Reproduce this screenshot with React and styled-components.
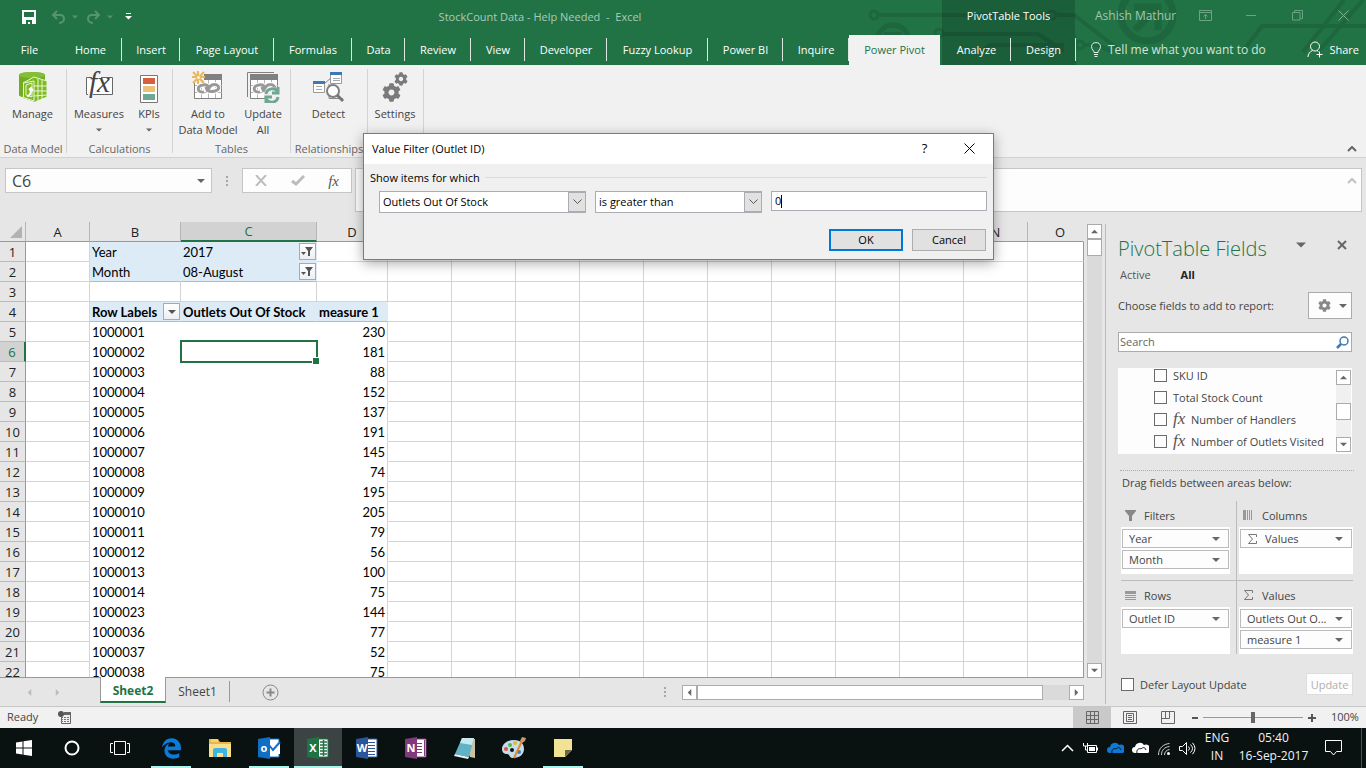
import React, { Fragment } from 'react';
import styled, { createGlobalStyle, css } from 'styled-components';
import { FaCog } from 'react-icons/fa';
import { FaEdgeLegacy } from 'react-icons/fa6';

const GlobalStyle = createGlobalStyle`
  * { box-sizing: border-box; }
  body {
    margin: 0;
    font-family: "Open Sans", "Noto Sans", sans-serif;
    font-size: 11px;
    color: #444;
  }
  button, input, select {
    font: inherit;
    color: inherit;
    margin: 0;
    padding: 0;
  }
  button { background: none; border: 0; }
  svg { display: block; flex: none; }
`;

/* ---------- shared bits ---------- */

const Window = styled.div`
  position: relative;
  display: flex;
  flex-direction: column;
  height: 100vh;
  overflow: hidden;
  background: #e6e6e6;
`;

const Row = styled.div`
  display: flex;
  align-items: center;
`;

const Triangle = ({ size = 7, color = '#666', dir = 'down' }) => {
  const turn = { down: 0, left: 90, up: 180, right: 270 }[dir];
  return (
    <svg width={size} height={size} viewBox="0 0 8 8" aria-hidden="true">
      <path d="M0 2h8L4 6z" fill={color} transform={`rotate(${turn} 4 4)`} />
    </svg>
  );
};

const CheckBox = styled.input.attrs({ type: 'checkbox' })`
  appearance: none;
  flex: none;
  width: 13px;
  height: 13px;
  border: 1px solid #6b6b6b;
  background: #fdfdfd;
`;

/* ---------- title bar and tabs ---------- */

const Header = styled.header`
  position: relative;
  z-index: 0;
  flex: none;
  background: #217346;
  color: #fff;
`;

const Circuit = styled.svg`
  position: absolute;
  top: 0;
  right: 0;
  z-index: -1;
`;

const TitleRow = styled(Row)`
  height: 35px;
`;

const QuickAccess = styled(Row)`
  flex: none;
  width: 138px;
  height: 100%;
  padding: 0 0 2px 22px;
`;

const QuickButton = styled.button`
  display: flex;
  margin-right: ${p => p.$gap || 0}px;
`;

const DocTitle = styled.div`
  flex: 1;
  padding-bottom: 3px;
  text-align: center;
  white-space: pre;
  color: #a9cbb8;
`;

const ContextTitle = styled.div`
  flex: none;
  width: 133px;
  height: 35px;
  line-height: 32px;
  text-align: center;
  background: rgba(10, 30, 20, 0.24);
`;

const UserArea = styled(Row)`
  flex: none;
  width: 291px;
  padding: 0 0 4px 20px;
  color: #a3c5b1;
`;

const UserName = styled.span`
  flex: 1;
  font-size: 12px;
`;

const WindowButton = styled.button`
  display: flex;
  justify-content: center;
  width: 46px;
`;

const TabRow = styled(Row)`
  height: 30px;
  align-items: stretch;
`;

const Tab = styled.button`
  position: relative;
  flex: none;
  width: ${p => p.$w}px;
  height: 30px;
  padding-bottom: 2px;
  white-space: nowrap;
  ${p => p.$context && css`background: rgba(10, 30, 20, 0.24);`}
  ${p => p.$active && css`
    margin-right: 2px;
    background: #f1f1f1;
    color: #217346;
  `}
  ${p => !p.$active && !p.$plain && css`
    &::after {
      content: '';
      position: absolute;
      top: 3px;
      right: 0;
      width: 1px;
      height: 23px;
      background: #dbe9e1;
    }
  `}
`;

const TellMe = styled(Row)`
  flex: 1;
  gap: 6px;
  padding: 0 0 2px 14px;
  font-size: 12px;
  color: #d3e3da;
`;

const Share = styled.button`
  display: flex;
  align-items: center;
  gap: 6px;
  padding: 0 7px 2px 0;
`;

const tabs = [
  { name: 'File', w: 59, plain: true },
  { name: 'Home', w: 63 },
  { name: 'Insert', w: 58 },
  { name: 'Page Layout', w: 94 },
  { name: 'Formulas', w: 78 },
  { name: 'Data', w: 53 },
  { name: 'Review', w: 66 },
  { name: 'View', w: 54 },
  { name: 'Developer', w: 82 },
  { name: 'Fuzzy Lookup', w: 101 },
  { name: 'Power BI', w: 75 },
  { name: 'Inquire', w: 66 },
  { name: 'Power Pivot', w: 91, active: true },
  { name: 'Analyze', w: 69, context: true },
  { name: 'Design', w: 65, context: true }
];

const TopHeader = () => (
  <Header>
    <Circuit width="506" height="65" fill="none" stroke="#1d663e" strokeWidth="4">
      <circle cx="14" cy="15" r="4" strokeWidth="3" />
      <path d="M18 15h170" />
      <circle cx="192" cy="15" r="4" strokeWidth="3" />
      <path d="M196 15h18l48 37" />
      <circle cx="33" cy="41" r="16" strokeWidth="5" />
      <path d="M24 34h16v16M40 34L28 46" />
      <circle cx="79" cy="33" r="4" strokeWidth="3" />
      <path d="M84 34h94l26 17" />
      <path d="M122 51l8-6h74" />
      <circle cx="220" cy="45" r="4" strokeWidth="3" />
      <path d="M224 45h14l14 7" />
      <circle cx="287" cy="15" r="26" strokeWidth="7" />
      <path d="M274 7h24v23M297 8l-22 22" strokeWidth="7" />
      <path d="M383 51l19-25h104" />
      <path d="M443 52L484 0M458 52L503 0" />
    </Circuit>
    <TitleRow>
      <QuickAccess>
        <QuickButton aria-label="Save" $gap={15}>
          <svg width="14" height="14">
            <path d="M0 0h14v14H0zM2 2v5h10V2zM4 10v4h2v-2h2v2h2v-4z" fill="#fff" fillRule="evenodd" />
          </svg>
        </QuickButton>
        <QuickButton aria-label="Undo" $gap={6}>
          <svg width="15" height="14" fill="none" stroke="#55946f" strokeWidth="2">
            <path d="M6 1L2 5l4 4M2 5h7c3 0 4 2 4 4s-2 4-5 4" />
          </svg>
        </QuickButton>
        <QuickButton aria-label="Undo history" $gap={8}><Triangle size={6} color="#55946f" /></QuickButton>
        <QuickButton aria-label="Redo" $gap={6}>
          <svg width="15" height="14" fill="none" stroke="#55946f" strokeWidth="2">
            <path d="M9 1l4 4-4 4M13 5H6C3 5 2 7 2 9s2 4 5 4" />
          </svg>
        </QuickButton>
        <QuickButton aria-label="Redo history" $gap={12}><Triangle size={6} color="#55946f" /></QuickButton>
        <QuickButton aria-label="Customize toolbar">
          <svg width="7" height="7" fill="#fff"><path d="M1 0h5v1H1zM0 3h7L3.500 6.500z" /></svg>
        </QuickButton>
      </QuickAccess>
      <DocTitle>StockCount Data - Help Needed  -  Excel</DocTitle>
      <ContextTitle>PivotTable Tools</ContextTitle>
      <UserArea>
        <UserName>Ashish Mathur</UserName>
        <WindowButton aria-label="Ribbon options">
          <svg width="13" height="11" fill="none" stroke="#6ba384">
            <path d="M.5.5h12v10H.5zM.5 2.500h12M6.500 9V4.500M4.500 6.500l2-2 2 2" />
          </svg>
        </WindowButton>
        <WindowButton aria-label="Minimize">
          <svg width="10" height="11" stroke="#6ba384"><path d="M0 5.500h10" /></svg>
        </WindowButton>
        <WindowButton aria-label="Restore">
          <svg width="11" height="11" fill="none" stroke="#6ba384">
            <path d="M.5 2.500h7.500v7.500H.5zM2.500 2.500v-2h8v8h-2" />
          </svg>
        </WindowButton>
        <WindowButton aria-label="Close window">
          <svg width="11" height="11" stroke="#7fb095"><path d="M.5.5l10 10M10.500.5l-10 10" /></svg>
        </WindowButton>
      </UserArea>
    </TitleRow>
    <TabRow as="nav">
      {tabs.map(t => (
        <Tab key={t.name} $w={t.w} $plain={t.plain} $active={t.active} $context={t.context}>
          {t.name}
        </Tab>
      ))}
      <TellMe>
        <svg width="12" height="15" fill="none" stroke="#e6f0ea">
          <path d="M4 10.500c0-2-2.500-3-2.500-6A4.300 4.300 0 0 1 6 .7a4.300 4.300 0 0 1 4.500 3.800c0 3-2.500 4-2.500 6zM4 12.500h4M4.500 14.500h3" />
        </svg>
        Tell me what you want to do
      </TellMe>
      <Share>
        <svg width="16" height="17" fill="none" stroke="#fff">
          <circle cx="8" cy="5.500" r="4.500" />
          <path d="M1 16c0-3 2-5.500 4.500-6.500M10 9.500l1.500 1M9.500 13.500h6M12.500 10.500v6" />
        </svg>
        Share
      </Share>
    </TabRow>
  </Header>
);

/* ---------- ribbon ---------- */

const Ribbon = styled.section`
  display: flex;
  flex: none;
  height: 93px;
  background: #f1f1f1;
  border-bottom: 1px solid #d2d2d2;
`;

const Group = styled.div`
  position: relative;
  display: flex;
  flex-direction: column;
  flex: none;
  width: ${p => p.$w}px;
  padding-top: 6px;
  &::after {
    content: '';
    position: absolute;
    top: 4px;
    right: 0;
    width: 1px;
    height: 84px;
    background: #d4d4d4;
  }
`;

const GroupItems = styled.div`
  display: flex;
  flex: 1;
  justify-content: center;
  padding-right: 2px;
`;

const GroupName = styled.div`
  height: 16px;
  padding-right: 1px;
  line-height: 16px;
  text-align: center;
  white-space: nowrap;
  color: #666;
`;

const BigButton = styled.button`
  display: flex;
  flex-direction: column;
  align-items: center;
  width: ${p => p.$w}px;
  line-height: 16px;
  white-space: nowrap;
`;

const ButtonIcon = styled.span`
  margin-bottom: 3px;
`;

const MenuArrow = styled.span`
  display: flex;
  align-items: center;
  height: 16px;
`;

const CollapseButton = styled.button`
  display: flex;
  align-self: flex-end;
  margin: 0 9px 5px auto;
`;

const Chevron = ({ color }) => (
  <svg width="10" height="6" fill="none" stroke={color} strokeWidth="2"><path d="M1 5l4-4 4 4" /></svg>
);

const FxGlyph = styled.span`
  width: ${p => p.$w || 14}px;
  font: italic ${p => p.$size}px "Liberation Serif", serif;
  line-height: 16px;
  color: #555;
`;

const ManageIcon = () => (
  <svg width="32" height="32">
    <path d="M2 4c0-4 26-4 26 0v20c0 4-26 4-26 0z" fill="#70ad23" />
    <path d="M2 4c0-4 26-4 26 0s-26 4-26 0z" fill="#84c035" />
    <path d="M6 12l11-6 13 4v16l-12 5-12-4z" fill="#7fba22" />
    <path d="M6 12l11-6 13 4M6.500 12v14.500l10.500 3.500V10zM9 14l6-2v14l-6-2zM17 15h13M17 20h13M17 25l13-1M21 8v22M25 9v19M30 10v16l-12 5" fill="none" stroke="#eaf6d8" />
    <path d="M10 25c3 0 4-2 4-7M12 19l2-2 2 3" fill="none" stroke="#fff" strokeWidth="2" />
  </svg>
);

const MeasuresIcon = () => (
  <svg width="32" height="32">
    <path d="M3.500 6.500h26v17h-26z" fill="#fff" stroke="#666" />
    <path d="M9 4h9v4H9zM5 21h5v4H5z" fill="#f4f4f4" />
    <text x="6" y="21" fontFamily="Liberation Serif" fontStyle="italic" fontSize="29" fill="#444">fx</text>
  </svg>
);

const KpiIcon = () => (
  <svg width="32" height="32">
    <path d="M7.500 4.500h17v27h-17z" fill="#fff" stroke="#777" />
    <path d="M10 7h12v6H10z" fill="#d65f3f" />
    <path d="M10 15h12v6H10z" fill="#ecc077" />
    <path d="M10 23h12v6H10z" fill="#6fa794" />
  </svg>
);

const TableBase = () => (
  <Fragment>
    <path d="M2.500 3.500h27v24h-27z" fill="#fff" stroke="#808080" />
    <path d="M2 3h28v6H2z" fill="#808080" />
    <path d="M3 14.500h27M3 21.500h27M9.500 9v18M16.500 9v18M23.500 9v18" stroke="#b5b5b5" fill="none" />
    <path d="M12 21c-7 1-8-6-1-7 4-1 6 2 6 3M14 16c1 5 5 5 9 4 7-2 3-8-3-6-3 1-2 4-6 6" stroke="#fff" strokeWidth="5" fill="none" />
    <path d="M12 21c-7 1-8-6-1-7 4-1 6 2 6 3M14 16c1 5 5 5 9 4 7-2 3-8-3-6-3 1-2 4-6 6" stroke="#999" strokeWidth="3" fill="none" />
  </Fragment>
);

const AddIcon = () => (
  <svg width="32" height="32">
    <TableBase />
    <path d="M0 0h12v12H0z" fill="#f1f1f1" />
    <path d="M6 0v13M0 6h13M1 1l11 11M12 1L1 12" stroke="#e9b65c" strokeWidth="2" />
    <circle cx="6.500" cy="6.500" r="2" fill="#fff4d8" stroke="#e9b65c" />
  </svg>
);

const UpdateIcon = () => (
  <svg width="34" height="32">
    <path d="M1.500 26V1.500H28" fill="none" stroke="#808080" />
    <g transform="translate(2)"><TableBase /></g>
    <circle cx="26" cy="24" r="8" fill="#f1f1f1" />
    <path d="M20 23c1-6 9-7 12-2M32 16v6h-6M32 26c-1 6-9 7-12 2M20 32v-6h6" fill="none" stroke="#6fa794" strokeWidth="3" />
  </svg>
);

const DetectIcon = () => (
  <svg width="32" height="32">
    <path d="M12 12l6-5M16 13v14.500h14" fill="none" stroke="#888" />
    <path d="M17.500 1.500h11v11h-11zM.5 10.500h11v11H.5z" fill="#fff" stroke="#999" />
    <path d="M17 1h12v3H17zM0 10h12v3H0z" fill="#3c78b4" />
    <path d="M20 7.500h7M20 9.500h7M3 15.500h6M3 18.500h6" stroke="#aaa" />
    <circle cx="20" cy="20" r="6" fill="#fff" stroke="#808080" strokeWidth="2" />
    <path d="M24 24l6 6" stroke="#777" strokeWidth="3" />
  </svg>
);

const SettingsIcon = () => (
  <svg width="32" height="32">
    <FaCog x="3" y="12" size={19} color="#7a7a7a" />
    <FaCog x="15" y="1" size={14} color="#7a7a7a" />
  </svg>
);

const groups = [
  { name: 'Data Model', w: 67, items: [{ icon: ManageIcon, lines: ['Manage'], w: 60 }] },
  {
    name: 'Calculations',
    w: 106,
    items: [
      { icon: MeasuresIcon, lines: ['Measures'], w: 60, menu: true },
      { icon: KpiIcon, lines: ['KPIs'], w: 40, menu: true }
    ]
  },
  {
    name: 'Tables',
    w: 118,
    items: [
      { icon: AddIcon, lines: ['Add to', 'Data Model'], w: 64 },
      { icon: UpdateIcon, lines: ['Update', 'All'], w: 46 }
    ]
  },
  { name: 'Relationships', w: 77, items: [{ icon: DetectIcon, lines: ['Detect'], w: 60 }] },
  { name: '', w: 56, items: [{ icon: SettingsIcon, lines: ['Settings'], w: 54 }] }
];

const RibbonBar = () => (
  <Ribbon>
    {groups.map(g => (
      <Group key={g.w} $w={g.w}>
        <GroupItems>
          {g.items.map(({ icon: Icon, lines, w, menu }) => (
            <BigButton key={lines[0]} $w={w}>
              <ButtonIcon><Icon /></ButtonIcon>
              {lines.map(l => <span key={l}>{l}</span>)}
              {menu && <MenuArrow><Triangle size={6} /></MenuArrow>}
            </BigButton>
          ))}
        </GroupItems>
        <GroupName>{g.name}</GroupName>
      </Group>
    ))}
    <CollapseButton aria-label="Collapse the ribbon"><Chevron color="#666" /></CollapseButton>
  </Ribbon>
);

/* ---------- formula bar ---------- */

const FormulaRow = styled.div`
  display: flex;
  flex: none;
  align-items: flex-start;
  height: 64px;
  padding: 10px 4px 0 5px;
`;

const NameBox = styled(Row)`
  flex: none;
  width: 207px;
  height: 25px;
  padding: 0 6px;
  border: 1px solid #c6c6c6;
  background: #fdfdfd;
`;

const NameInput = styled.input`
  flex: 1;
  min-width: 0;
  height: 22px;
  border: 0;
  background: none;
  font-size: 16px;
`;

const Dots = styled(Row)`
  justify-content: center;
  width: ${p => p.$w}px;
  height: 25px;
`;

const FormulaButtons = styled(Row)`
  flex: none;
  justify-content: space-between;
  width: 110px;
  height: 25px;
  padding: 0 12px;
  margin-right: 3px;
  border: 1px solid #c6c6c6;
  background: #fdfdfd;
`;

const FormulaField = styled.div`
  display: flex;
  flex: 1;
  height: 44px;
  border: 1px solid #c6c6c6;
  background: #fdfdfd;
`;

const FormulaInput = styled.input`
  flex: 1;
  border: 0;
  background: none;
`;

const ExpandButton = styled.button`
  display: flex;
  align-self: flex-start;
  margin: 9px 4px 0;
`;

const DotColumn = () => (
  <svg width="2" height="10" fill="#a6a6a6"><path d="M0 0h2v2H0zM0 4h2v2H0zM0 8h2v2H0z" /></svg>
);

const FormulaBar = () => (
  <FormulaRow>
    <NameBox>
      <NameInput aria-label="Name box" defaultValue="C6" />
      <Triangle size={8} />
    </NameBox>
    <Dots $w={30}><DotColumn /></Dots>
    <FormulaButtons>
      <button aria-label="Cancel entry">
        <svg width="12" height="11" stroke="#bdbdbd" strokeWidth="2"><path d="M1 0l10 11M11 0L1 11" /></svg>
      </button>
      <button aria-label="Enter">
        <svg width="14" height="11" fill="none" stroke="#bdbdbd" strokeWidth="3"><path d="M1 6l4 3 8-8" /></svg>
      </button>
      <button aria-label="Insert function"><FxGlyph as="b" $size={15}>fx</FxGlyph></button>
    </FormulaButtons>
    <FormulaField>
      <FormulaInput aria-label="Formula" />
      <ExpandButton aria-label="Expand formula bar"><Chevron color="#c0c0c0" /></ExpandButton>
    </FormulaField>
  </FormulaRow>
);

/* ---------- sheet ---------- */

const Workspace = styled.div`
  display: flex;
  flex: 1;
  min-height: 0;
`;

const SheetSide = styled.main`
  display: flex;
  flex: 1;
  flex-direction: column;
  min-width: 0;
`;

const SheetArea = styled.div`
  display: flex;
  flex: 1;
  min-height: 0;
`;

const SheetScroll = styled.div`
  flex: 1;
  min-width: 0;
  overflow: hidden;
  border-bottom: 1px solid #999;
`;

const Sheet = styled.table`
  width: 100%;
  table-layout: fixed;
  border-spacing: 0;
  background: #fff;
  font: 13px Lato, "Open Sans", sans-serif;
  color: #000;
`;

const Col = styled.col`
  width: ${p => (p.$w ? `${p.$w}px` : 'auto')};
`;

const headCell = css`
  height: 20px;
  padding: 0;
  font: 13px/18px "Open Sans", sans-serif;
  text-align: center;
  background: ${p => (p.$on ? '#d2d2d2' : '#e6e6e6')};
  color: ${p => (p.$on ? '#217346' : '#222')};
`;

const ColHead = styled.th`
  ${headCell}
  border-right: 1px solid #b5b5b5;
  border-bottom: ${p => (p.$on ? '2px solid #217346' : '1px solid #999')};
  &:last-child {
    padding-left: 9px;
    border-right-color: #e6e6e6;
  }
`;

const RowHead = styled.th`
  ${headCell}
  border-bottom: 1px solid #bbb;
  border-right: ${p => (p.$on ? '2px solid #217346' : '1px solid #999')};
`;

const Corner = styled.td`
  padding: 3px 3px 2px 10px;
  background: #e6e6e6;
  border-right: 1px solid #b5b5b5;
  border-bottom: 1px solid #999;
`;

const Cell = styled.td`
  position: relative;
  height: 20px;
  padding: 2px 2px 0;
  line-height: 17px;
  white-space: nowrap;
  text-align: ${p => (p.$right ? 'right' : 'left')};
  font-weight: ${p => (p.$bold ? 700 : 400)};
  border-right: 1px solid ${p => (p.$noRight ? 'transparent' : '#d4d4d4')};
  border-bottom: 1px solid ${p => (p.$noBottom ? 'transparent' : '#d4d4d4')};
  ${p => p.$blue && css`
    background: #ddebf7;
    border-color: #ddebf7;
  `}
  ${p => p.$underline && css`border-bottom-color: #9bc2e6;`}
  &:last-child { border-right-color: #999; }
`;

// frame and fill handle of the selected cell
const Selection = styled.div`
  position: absolute;
  inset: -2px -2px -2px -1px;
  z-index: 1;
  border: 2px solid #217346;
  &::after {
    content: '';
    position: absolute;
    right: -3px;
    bottom: -3px;
    width: 6px;
    height: 6px;
    border: solid #fff;
    border-width: 1px 0 0 1px;
    background: #217346;
  }
`;

const CellInner = styled.div`
  display: flex;
  justify-content: space-between;
  height: 17px;
  margin-right: -2px;
`;

const FilterButton = styled.button`
  display: flex;
  align-items: center;
  justify-content: center;
  width: 17px;
  height: 17px;
  margin-top: -1px;
  border: 1px solid #a3abb5;
  background: linear-gradient(#fff, #eceff3);
`;

const FunnelSmall = () => (
  <svg width="13" height="11">
    <path d="M4 1h8L9 5v5H7V5z" fill="#555" />
    <path d="M0 6h5L2.500 9z" fill="#555" />
  </svg>
);

const letters = 'ABCDEFGHIJKLMNO'.split('');
const colWidths = [64, 91, 136, 71, 64, 64, 64, 64, 64, 64, 64, 64, 64, 64, 0];

const records = [
  ['1000001', 230], ['1000002', 181], ['1000003', 88], ['1000004', 152],
  ['1000005', 137], ['1000006', 191], ['1000007', 145], ['1000008', 74],
  ['1000009', 195], ['1000010', 205], ['1000011', 79], ['1000012', 56],
  ['1000013', 100], ['1000014', 75], ['1000023', 144], ['1000036', 77],
  ['1000037', 52], ['1000038', 75]
];

const Blanks = ({ from, to = 15 }) =>
  letters.slice(from, to).map(l => <Cell key={l} />);

const PivotSheet = () => (
  <Sheet>
    <colgroup>
      <Col $w={26} />
      {colWidths.map((w, i) => <Col key={letters[i]} $w={w} />)}
    </colgroup>
    <thead>
      <tr>
        <Corner>
          <svg width="12" height="12"><path d="M12 0v12H0z" fill="#b2b2b2" /></svg>
        </Corner>
        {letters.map(l => <ColHead key={l} scope="col" $on={l === 'C'}>{l}</ColHead>)}
      </tr>
    </thead>
    <tbody>
      {[['Year', '2017'], ['Month', '08-August']].map(([label, value], i) => (
        <tr key={label}>
          <RowHead scope="row">{i + 1}</RowHead>
          <Cell />
          <Cell $blue $underline={i === 1}>{label}</Cell>
          <Cell $blue $underline={i === 1}>
            <CellInner>
              {value}
              <FilterButton aria-label={`Filter ${label}`}><FunnelSmall /></FilterButton>
            </CellInner>
          </Cell>
          <Blanks from={3} />
        </tr>
      ))}
      <tr>
        <RowHead scope="row">3</RowHead>
        <Blanks from={0} />
      </tr>
      <tr>
        <RowHead scope="row">4</RowHead>
        <Cell />
        <Cell $blue $underline $bold>
          <CellInner>
            Row Labels
            <FilterButton aria-label="Filter row labels"><Triangle size={8} color="#555" /></FilterButton>
          </CellInner>
        </Cell>
        <Cell $blue $underline $bold>Outlets Out Of Stock</Cell>
        <Cell $blue $underline $bold>measure 1</Cell>
        <Blanks from={4} />
      </tr>
      {records.map(([id, measure], i) => (
        <tr key={id}>
          <RowHead scope="row" $on={i === 1}>{i + 5}</RowHead>
          <Cell />
          <Cell $noRight $noBottom>{id}</Cell>
          <Cell $noRight $noBottom>{i === 1 && <Selection />}</Cell>
          <Cell $right $noBottom>{measure}</Cell>
          <Blanks from={4} />
        </tr>
      ))}
    </tbody>
  </Sheet>
);

/* ---------- scroll bars ---------- */

const VScroll = styled.div`
  display: flex;
  flex: none;
  flex-direction: column;
  width: 15px;
  margin: ${p => p.$margin};
  background: ${p => p.$track || '#dadada'};
`;

const HScroll = styled.div`
  display: flex;
  flex: none;
  width: 38%;
  height: 15px;
  margin-left: 16px;
  background: #dadada;
`;

const ScrollButton = styled.button`
  display: flex;
  flex: none;
  align-items: center;
  justify-content: center;
  width: 15px;
  height: 15px;
  border: 1px solid #ababab;
  background: #fff;
`;

const Thumb = styled.div`
  flex: none;
  width: ${p => p.$w || '15px'};
  height: ${p => p.$h || '15px'};
  border: 1px solid #ababab;
  background: #fff;
`;

const Spacer = styled.div`
  flex: ${p => p.$grow || 1};
`;

/* ---------- sheet tabs ---------- */

const SheetTabs = styled(Row)`
  flex: none;
  height: 28px;
  padding: 0 21px 0 26px;
`;

const NavButton = styled.button`
  display: flex;
  margin-right: 21px;
`;

const SheetTab = styled.button`
  position: relative;
  align-self: flex-start;
  width: 64px;
  height: 21px;
  margin-top: 3px;
  font-size: 12px;
  border-right: 1px solid #999;
  ${p => p.$active && css`
    width: 66px;
    height: 26px;
    margin: -1px 0 0 18px;
    padding-top: 3px;
    border: solid #999;
    border-width: 0 1px;
    border-bottom: 2px solid #217346;
    background: #fff;
    color: #217346;
    font-weight: 700;
  `}
`;

const AddSheet = styled.button`
  display: flex;
  margin-left: 32px;
`;

/* ---------- fields panel ---------- */

const Panel = styled.aside`
  display: flex;
  flex: none;
  flex-direction: column;
  width: 261px;
  margin: 2px 0;
  padding: 10px 14px 0 12px;
  border-left: 1px solid #bbb;
`;

const PanelHead = styled(Row)`
  height: 28px;
`;

const PanelTitle = styled.h2`
  flex: 1;
  margin: 0;
  font-size: 20px;
  font-weight: 300;
  white-space: nowrap;
  color: #217346;
`;

const PanelIcon = styled.button`
  display: flex;
  margin: 0 5px 6px 26px;
`;

const PanelTabs = styled(Row)`
  height: 20px;
  margin-top: 2px;
`;

const PanelTab = styled.button`
  margin-left: 2px;
  margin-right: 28px;
  font-weight: ${p => (p.$active ? 700 : 400)};
  color: ${p => (p.$active ? '#222' : '#555')};
`;

const ChooseRow = styled(Row)`
  justify-content: space-between;
  height: 27px;
  margin-top: 8px;
`;

const ToolsButton = styled.button`
  display: flex;
  align-items: center;
  justify-content: space-between;
  width: 44px;
  height: 27px;
  padding: 0 4px 0 9px;
  border: 1px solid #ababab;
  background: #fdfdfd;
`;

const SearchBox = styled(Row)`
  height: 20px;
  margin-top: 13px;
  padding: 0 2px 0 1px;
  border: 1px solid #ababab;
  background: #fff;
`;

const SearchInput = styled.input`
  flex: 1;
  min-width: 0;
  padding-bottom: 2px;
  border: 0;
  background: none;
  &::placeholder { color: #666; opacity: 1; }
`;

const FieldBox = styled.div`
  display: flex;
  height: 86px;
  margin-top: 16px;
  background: #fdfdfd;
`;

const FieldList = styled.ul`
  flex: 1;
  min-width: 0;
  margin: 0;
  padding: 0 0 0 36px;
  overflow: hidden;
  list-style: none;
`;

const Field = styled.label`
  display: flex;
  align-items: center;
  gap: 6px;
  height: ${p => (p.$first ? 18 : 22)}px;
  white-space: nowrap;
  ${p => p.$first && css`padding-bottom: 3px;`}
`;

const DragHint = styled.p`
  height: 21px;
  margin: 16px -2px 0 2px;
  padding: 3px 0 0 2px;
  line-height: 17px;
  border-top: 1px dotted #aaa;
`;

const Areas = styled.div`
  display: grid;
  grid-template-columns: 1fr 1fr;
  margin: 10px -1px 0 3px;
`;

const Area = styled.section`
  min-width: 0;
  padding: 0 ${p => (p.$left ? '6px' : '0')} ${p => (p.$top ? '6px' : '0')} ${p => (p.$left ? '0' : '2px')};
  border-right: ${p => (p.$left ? '1px solid #bbb' : '0')};
  border-bottom: ${p => (p.$top ? '1px solid #bbb' : '0')};
`;

const AreaHead = styled.h3`
  display: flex;
  align-items: center;
  gap: 8px;
  height: 26px;
  margin: 0;
  padding: 2px 0 0 4px;
  font-size: 11px;
  font-weight: 400;
`;

const AreaBox = styled.div`
  height: 47px;
  padding: 2px 1px;
  background: #fff;
`;

const Chip = styled.button`
  display: flex;
  align-items: center;
  gap: 7px;
  width: 100%;
  height: 19px;
  margin-bottom: 2px;
  padding: 0 8px 0 6px;
  border: 1px solid #bbb;
  background: #fdfdfd;
  text-align: left;
`;

const ChipText = styled.span`
  flex: 1;
  overflow: hidden;
  white-space: nowrap;
`;

const Sigma = () => (
  <svg width="11" height="10" fill="none" stroke="#777"><path d="M9.500 3v-2.500h-8l4 4.500-4 4.500h8V7" /></svg>
);

const areaIcons = {
  Filters: <svg width="11" height="11"><path d="M0 0h11v1L7 6v5H4V6L0 1z" fill="#888" /></svg>,
  Columns: <svg width="11" height="10" fill="#999"><path d="M0 0h3v10H0zM4 0h1v10H4zM6 0h1v10H6zM8 0h1v10H8z" /></svg>,
  Rows: <svg width="11" height="9" fill="#999"><path d="M0 0h11v3H0zM0 4h11v1H0zM0 6h11v1H0zM0 8h11v1H0z" /></svg>,
  Values: <Sigma />
};

const areas = [
  { name: 'Filters', left: true, top: true, items: ['Year', 'Month'] },
  { name: 'Columns', top: true, items: ['Values'], sigma: true },
  { name: 'Rows', left: true, items: ['Outlet ID'] },
  { name: 'Values', items: ['Outlets Out O...', 'measure 1'] }
];

const fields = [
  { name: 'SKU ID' },
  { name: 'Total Stock Count' },
  { name: 'Number of Handlers', fx: true },
  { name: 'Number of Outlets Visited', fx: true }
];

const PanelFoot = styled(Row)`
  justify-content: space-between;
  height: 22px;
  margin: 19px -1px 0 3px;
`;

const Defer = styled.label`
  display: flex;
  align-items: center;
  gap: 6px;
`;

const UpdateButton = styled.button`
  width: 47px;
  height: 22px;
  border: 1px solid #ddd;
  background: #fdfdfd;
  color: #b0b0b0;
`;

const FieldsPanel = () => (
  <Panel>
    <PanelHead>
      <PanelTitle>PivotTable Fields</PanelTitle>
      <PanelIcon aria-label="Pane options"><Triangle size={10} /></PanelIcon>
      <PanelIcon aria-label="Close pane">
        <svg width="10" height="10" stroke="#666" strokeWidth="2"><path d="M1 1l8 8M9 1L1 9" /></svg>
      </PanelIcon>
    </PanelHead>
    <PanelTabs>
      <PanelTab>Active</PanelTab>
      <PanelTab $active>All</PanelTab>
    </PanelTabs>
    <ChooseRow>
      Choose fields to add to report:
      <ToolsButton aria-label="Tools">
        <FaCog size={13} color="#888" />
        <Triangle size={8} />
      </ToolsButton>
    </ChooseRow>
    <SearchBox>
      <SearchInput aria-label="Search fields" placeholder="Search" />
      <svg width="13" height="13" fill="none" stroke="#3c78b4">
        <circle cx="8" cy="5" r="4" strokeWidth="1.500" />
        <path d="M5 8l-4 4" strokeWidth="2.500" />
      </svg>
    </SearchBox>
    <FieldBox>
      <FieldList>
        {fields.map((f, i) => (
          <li key={f.name}>
            <Field $first={i === 0}>
              <CheckBox />
              {f.fx && <FxGlyph $size={17} $w={12}>fx</FxGlyph>}
              {f.name}
            </Field>
          </li>
        ))}
      </FieldList>
      <VScroll $margin="2px 1px 2px 0" $track="#f0f0f0">
        <ScrollButton aria-label="Fields up"><Triangle dir="up" /></ScrollButton>
        <Spacer $grow={18} />
        <Thumb $h="17px" />
        <Spacer $grow={17} />
        <ScrollButton aria-label="Fields down"><Triangle /></ScrollButton>
      </VScroll>
    </FieldBox>
    <DragHint>Drag fields between areas below:</DragHint>
    <Areas>
      {areas.map(a => (
        <Area key={a.items[0]} $left={a.left} $top={a.top}>
          <AreaHead>{areaIcons[a.name]}{a.name}</AreaHead>
          <AreaBox>
            {a.items.map(item => (
              <Chip key={item}>
                {a.sigma && <Sigma />}
                <ChipText>{item}</ChipText>
                <Triangle size={8} />
              </Chip>
            ))}
          </AreaBox>
        </Area>
      ))}
    </Areas>
    <PanelFoot>
      <Defer><CheckBox />Defer Layout Update</Defer>
      <UpdateButton disabled>Update</UpdateButton>
    </PanelFoot>
  </Panel>
);

/* ---------- status bar ---------- */

const StatusBar = styled(Row)`
  flex: none;
  height: 22px;
  padding-left: 7px;
  border-top: 1px solid #c6c6c6;
  background: #f1f1f1;
`;

const StatusText = styled.span`
  padding-bottom: 2px;
`;

const ViewButton = styled.button`
  display: flex;
  align-items: center;
  justify-content: center;
  width: 38px;
  height: 21px;
  background: ${p => (p.$on ? '#c9c9c9' : 'none')};
`;

const ZoomSlider = styled.input.attrs({ type: 'range' })`
  appearance: none;
  width: 100px;
  height: 13px;
  margin: 0 5px;
  background: linear-gradient(#999, #999) center / 100% 1px no-repeat;
  &::-webkit-slider-thumb {
    appearance: none;
    width: 4px;
    height: 11px;
    background: #666;
  }
`;

const Percent = styled(StatusText)`
  width: 27px;
  margin: 0 8px 0 15px;
  white-space: nowrap;
`;

const RecordIcon = styled.button`
  display: flex;
  margin-left: 20px;
`;

const Status = () => (
  <StatusBar>
    <StatusText>Ready</StatusText>
    <RecordIcon aria-label="Record macro">
      <svg width="13" height="13">
        <path d="M3.500 2.500h9v10h-9zM5 2.500h8" fill="none" stroke="#666" />
        <path d="M6 1h7v3H6z" fill="#666" />
        <path d="M3 6.500h9M3 8.500h9M3 10.500h9" stroke="#777" strokeDasharray="2 1" />
        <circle cx="3" cy="3" r="3" fill="#555" />
      </svg>
    </RecordIcon>
    <Spacer />
    <ViewButton $on aria-label="Normal">
      <svg width="13" height="13" fill="none" stroke="#666"><path d="M.5.5h12v12H.5zM.5 4.500h12M.5 8.500h12M4.500.5v12M8.500.5v12" /></svg>
    </ViewButton>
    <ViewButton aria-label="Page layout">
      <svg width="14" height="13" fill="none" stroke="#666"><path d="M.5.5h13v12H.5zM3.500 2.500h7v8h-7zM5 4.500h4M5 6.500h4M5 8.500h4" /></svg>
    </ViewButton>
    <ViewButton aria-label="Page break preview">
      <svg width="14" height="13" fill="none" stroke="#666"><path d="M.5.5h13v12H.5zM4.500.5v7M8.500.5v7M.5 7.500h8" /></svg>
    </ViewButton>
    <Row>
      <button aria-label="Zoom out">
        <svg width="11" height="8"><path d="M5 3h6v2H5z" fill="#555" /></svg>
      </button>
      <ZoomSlider aria-label="Zoom" defaultValue="50" />
      <button aria-label="Zoom in">
        <svg width="8" height="8"><path d="M3 0h2v3h3v2H5v3H3V5H0V3h3z" fill="#555" /></svg>
      </button>
    </Row>
    <Percent>100%</Percent>
  </StatusBar>
);

/* ---------- taskbar ---------- */

const Taskbar = styled.footer`
  display: flex;
  flex: none;
  height: 40px;
  background: #0a1211;
  color: #f2f2f2;
`;

const TaskButton = styled.button`
  display: flex;
  flex: none;
  align-items: center;
  justify-content: center;
  width: 48px;
  height: 40px;
  margin-right: ${p => (p.$app ? 1 : 0)}px;
  background: ${p => (p.$on ? '#3b4443' : 'none')};
  ${p => p.$line && css`
    box-shadow: inset 0 -2px #a8f5ee;
  `}
  ${p => p.$line && !p.$on && css`
    width: 40px;
    margin: 0 5px 0 4px;
  `}
`;

const AppButtons = styled.div`
  display: flex;
  flex: 1;
  margin-left: 3px;
`;

const TrayIcons = styled(Row)`
  flex: none;
  gap: 8px;
  button { display: flex; }
`;

const TrayText = styled.div`
  flex: none;
  width: ${p => p.$w}px;
  padding-top: 1px;
  font-size: 12px;
  line-height: 18px;
  text-align: center;
  white-space: nowrap;
`;

const ShowDesktop = styled.button`
  width: 5px;
  margin-left: 4px;
  border-left: 1px solid #4a5251;
`;

const OfficeIcon = ({ letter, color, kind }) => (
  <svg width="24" height="24">
    <path d="M12 3h10v18H12z" fill="#fff" stroke={color} />
    {kind === 'grid' && <path d="M14 6h7M14 9h7M14 12h7M14 15h7M14 18h7M17.500 4v16" stroke={color} strokeWidth="1.500" />}
    {kind === 'text' && <path d="M13 6.500h7M13 9.500h7M13 12.500h7M13 15.500h7M13 18.500h7" stroke={color} />}
    {kind === 'book' && <path d="M13 7.500h5M13 10.500h5M13 13.500h5M13 16.500h5M20.500 4v16" stroke={color} />}
    {kind === 'mail' && <path d="M12 6h11v12H12z" fill="#fff" />}
    {kind === 'mail' && <path d="M12 9l4 5 7-8" fill="none" stroke={color} strokeWidth="2" />}
    <path d="M1 3l12-2v22L1 21z" fill={color} />
    <text x="7" y="16" textAnchor="middle" fontFamily="Open Sans" fontWeight="700" fontSize="11" fill="#fff">{letter}</text>
  </svg>
);

const FolderIcon = () => (
  <svg width="22" height="20">
    <path d="M0 1h9l2 3h11v15H0z" fill="#e8b64c" />
    <path d="M0 6h22v13H0z" fill="#fbe08c" />
    <path d="M2 1h7v3H2z" fill="#f7d264" />
    <path d="M4 19v-7q0-2 2-2h10q2 0 2 2v7h-4v-4H8v4z" fill="#3fb4e0" />
  </svg>
);

const NotepadIcon = () => (
  <svg width="24" height="24">
    <path d="M9 2l13 1v19l-5-1z" fill="#c9c2a0" />
    <path d="M9 2h12l-5 19-14-3z" fill="#5fb3c4" />
    <path d="M9 2h12l-2 7L7 7z" fill="#c7e8ee" />
    <path d="M2 18l14 3-1 2-14-3z" fill="#e2f2f4" />
  </svg>
);

const PaintIcon = () => (
  <svg width="26" height="26">
    <path d="M13 5c7 0 10 4 10 9s-4 9-11 9c-4 0-3-4-6-4S1 17 1 14c0-5 5-9 12-9z" fill="#c4ddea" />
    <circle cx="11" cy="15" r="2" fill="#0a1211" />
    <circle cx="5" cy="14" r="2" fill="#e2503f" />
    <circle cx="9" cy="10" r="2" fill="#56b947" />
    <circle cx="14" cy="8" r="2" fill="#f0b429" />
    <circle cx="18" cy="17" r="2" fill="#3b7fd0" />
    <path d="M13 23l8-17" stroke="#e08a2c" strokeWidth="2" />
    <path d="M19 6l2-4 4 1-1 3-3 2z" fill="#c89a6b" />
  </svg>
);

const StickyIcon = () => (
  <svg width="18" height="18">
    <path d="M0 0h18v11l-7 7H0z" fill="#f2e394" />
    <path d="M18 11h-7v7z" fill="#6c6645" />
  </svg>
);

const TaskbarRow = () => (
  <Taskbar>
    <TaskButton aria-label="Start">
      <svg width="16" height="16" fill="#fff"><path d="M0 2.500L6.500 1.500v6H0zM7.500 1.300L16 0v7.500H7.500zM0 8.500h6.500v6L0 13.500zM7.500 8.500H16V16l-8.500-1.300z" /></svg>
    </TaskButton>
    <TaskButton aria-label="Search Windows">
      <svg width="16" height="16" fill="none" stroke="#fff" strokeWidth="2"><circle cx="8" cy="8" r="6.500" /></svg>
    </TaskButton>
    <TaskButton aria-label="Task view">
      <svg width="20" height="14" fill="none" stroke="#fff"><path d="M4.500.5h11v13h-11zM3 2.500H.5v9H3M17 2.500h2.500v9H17" /></svg>
    </TaskButton>
    <AppButtons>
      <TaskButton $app $line aria-label="Edge"><FaEdgeLegacy size={21} color="#0a7bd8" /></TaskButton>
      <TaskButton $app aria-label="File Explorer"><FolderIcon /></TaskButton>
      <TaskButton $app $line aria-label="Outlook"><OfficeIcon letter="o" color="#0f6fc5" kind="mail" /></TaskButton>
      <TaskButton $app $line $on aria-label="Excel"><OfficeIcon letter="X" color="#1f7244" kind="grid" /></TaskButton>
      <TaskButton $app aria-label="Word"><OfficeIcon letter="W" color="#2a5699" kind="text" /></TaskButton>
      <TaskButton $app aria-label="OneNote"><OfficeIcon letter="N" color="#80397b" kind="book" /></TaskButton>
      <TaskButton $app aria-label="Notepad"><NotepadIcon /></TaskButton>
      <TaskButton $app aria-label="Paint"><PaintIcon /></TaskButton>
      <TaskButton $app $line aria-label="Sticky Notes"><StickyIcon /></TaskButton>
    </AppButtons>
    <TrayIcons>
      <button aria-label="Hidden icons">
        <svg width="13" height="8" fill="none" stroke="#fff"><path d="M1 7l5.500-5.500L12 7" strokeWidth="1.500" /></svg>
      </button>
      <button aria-label="Battery">
        <svg width="17" height="13" fill="none" stroke="#fff">
          <path d="M5.500 3.500h9v7h-9zM15.500 5.500v3M1.500 1v3h4V1M3.500 4v4h2" />
          <path d="M7 5h6v4H7z" fill="#fff" stroke="none" />
        </svg>
      </button>
      <button aria-label="OneDrive business">
        <svg width="17" height="12"><path d="M3 11a3 3 0 0 1 0-6 5 5 0 0 1 9-2 4 4 0 0 1 4 8z" fill="#0f78d7" /><path d="M5 11C4 7 8 6 9 7c2-2 4-2 5 1" fill="none" stroke="#0a1211" /></svg>
      </button>
      <button aria-label="OneDrive">
        <svg width="17" height="12"><path d="M3 11a3 3 0 0 1 0-6 5 5 0 0 1 9-2 4 4 0 0 1 4 8z" fill="#fff" /><path d="M5 11C4 7 8 6 9 7c2-2 4-2 5 1" fill="none" stroke="#0a1211" /></svg>
      </button>
      <button aria-label="Network">
        <svg width="14" height="13" fill="none" stroke="#d0d0d0"><path d="M1.500 13c0-7 5-11 11-11.500M4.500 13c0-5 3-8 8-8.500M7.500 13c0-3 2-5 5-5.500" /><circle cx="11.500" cy="11.500" r="1.500" fill="#fff" stroke="none" /></svg>
      </button>
      <button aria-label="Volume">
        <svg width="17" height="13" fill="none" stroke="#fff"><path d="M.5 4.500h3l4-4v12l-4-4h-3zM9.500 4.500q2 2 0 4M11.500 2.500q4 4 0 8M13.500.8q5 5.700 0 11.400" /></svg>
      </button>
    </TrayIcons>
    <TrayText $w={42}>ENG<br />IN</TrayText>
    <TrayText $w={71}>05:40<br />16-Sep-2017</TrayText>
    <TaskButton aria-label="Notifications">
      <svg width="17" height="16" fill="none" stroke="#fff"><path d="M.5.5h16v11h-5l-3 3.500-3-3.500h-5z" /></svg>
    </TaskButton>
    <ShowDesktop aria-label="Show desktop" />
  </Taskbar>
);

/* ---------- dialog ---------- */

const Dialog = styled.form`
  position: absolute;
  top: 133px;
  left: 363px;
  z-index: 5;
  width: 631px;
  height: 127px;
  border: 1px solid #2f9e90;
  background: #f0f0f0;
  color: #000;
  box-shadow: 0 3px 12px rgba(0, 0, 0, 0.35);
`;

const DialogHead = styled(Row)`
  height: 30px;
  padding: 0 18px 2px 8px;
  background: #fff;
`;

const DialogTitle = styled.h2`
  flex: 1;
  margin: 0;
  font-size: 11px;
  font-weight: 400;
`;

const DialogIcon = styled.button`
  display: flex;
  justify-content: center;
  width: 11px;
  margin-left: 34px;
  font-size: 13px;
`;

const Legend = styled(Row)`
  gap: 5px;
  height: 20px;
  margin: 3px 6px 4px;
  &::after {
    content: '';
    flex: 1;
    height: 1px;
    background: #dcdcdc;
  }
`;

const Controls = styled.div`
  display: flex;
  gap: 9px;
  padding: 0 6px 0 15px;
`;

const Picker = styled.div`
  position: relative;
  flex: none;
  width: ${p => p.$w}px;
  height: 22px;
`;

const Select = styled.select`
  appearance: none;
  width: 100%;
  height: 22px;
  padding: 0 20px 1px 3px;
  border: 1px solid #ababb3;
  border-radius: 0;
  background: #fff;
`;

const PickerArrow = styled.span`
  position: absolute;
  top: 1px;
  right: 0;
  display: flex;
  align-items: center;
  justify-content: center;
  width: 18px;
  height: 20px;
  border: 1px solid #ababb3;
  background: #e1e1e1;
  pointer-events: none;
`;

const ValueBox = styled(Row)`
  flex: 1;
  height: 20px;
  padding-left: 3px;
  border: 1px solid #ababb3;
  background: #fff;
`;

const ValueInput = styled.input`
  width: 6px;
  padding-bottom: 1px;
  border: 0;
  outline: 0;
  background: none;
`;

const TextCaret = styled.i`
  width: 1px;
  height: 13px;
  background: #000;
`;

const DialogButtons = styled.div`
  display: flex;
  justify-content: flex-end;
  gap: 9px;
  margin: 16px 7px 0;
`;

const DialogButton = styled.button`
  width: 74px;
  height: 22px;
  padding-bottom: 1px;
  border: ${p => (p.$primary ? '2px solid #0078d7' : '1px solid #adadad')};
  background: #e1e1e1;
`;

const ArrowDown = () => (
  <PickerArrow>
    <svg width="9" height="6" fill="none" stroke="#555"><path d="M.5.500l4 4 4-4" /></svg>
  </PickerArrow>
);

const ValueFilterDialog = () => (
  <Dialog role="dialog" aria-label="Value Filter" onSubmit={e => e.preventDefault()}>
    <DialogHead>
      <DialogTitle>Value Filter (Outlet ID)</DialogTitle>
      <DialogIcon type="button" aria-label="Help">?</DialogIcon>
      <DialogIcon type="button" aria-label="Close">
        <svg width="11" height="11" stroke="#000"><path d="M.5.5l10 10M10.500.5l-10 10" /></svg>
      </DialogIcon>
    </DialogHead>
    <Legend>Show items for which</Legend>
    <Controls>
      <Picker $w={207}>
        <Select aria-label="Value field"><option>Outlets Out Of Stock</option></Select>
        <ArrowDown />
      </Picker>
      <Picker $w={167}>
        <Select aria-label="Condition"><option>is greater than</option></Select>
        <ArrowDown />
      </Picker>
      <ValueBox>
        <ValueInput aria-label="Value" defaultValue="0" />
        <TextCaret />
      </ValueBox>
    </Controls>
    <DialogButtons>
      <DialogButton $primary>OK</DialogButton>
      <DialogButton type="button">Cancel</DialogButton>
    </DialogButtons>
  </Dialog>
);

const App = () => (
  <Window>
    <GlobalStyle />
    <TopHeader />
    <RibbonBar />
    <FormulaBar />
    <Workspace>
      <SheetSide>
        <SheetArea>
          <SheetScroll><PivotSheet /></SheetScroll>
          <VScroll $margin="2px 3px 0">
            <ScrollButton aria-label="Scroll up"><Triangle dir="up" /></ScrollButton>
            <Thumb $h="17px" />
            <Spacer />
            <ScrollButton aria-label="Scroll down"><Triangle /></ScrollButton>
          </VScroll>
        </SheetArea>
        <SheetTabs>
          <NavButton aria-label="Previous sheet"><Triangle dir="left" color="#bbb" /></NavButton>
          <NavButton aria-label="Next sheet"><Triangle dir="right" color="#bbb" /></NavButton>
          <SheetTab $active>Sheet2</SheetTab>
          <SheetTab>Sheet1</SheetTab>
          <AddSheet aria-label="New sheet">
            <svg width="17" height="17" fill="none" stroke="#888">
              <circle cx="8.500" cy="8.500" r="7.500" />
              <path d="M8.500 4.500v8M4.500 8.500h8" strokeWidth="2" />
            </svg>
          </AddSheet>
          <Spacer />
          <DotColumn />
          <HScroll>
            <ScrollButton aria-label="Scroll left"><Triangle dir="left" /></ScrollButton>
            <Thumb $w="86%" />
            <Spacer />
            <ScrollButton aria-label="Scroll right"><Triangle dir="right" /></ScrollButton>
          </HScroll>
        </SheetTabs>
      </SheetSide>
      <FieldsPanel />
    </Workspace>
    <Status />
    <TaskbarRow />
    <ValueFilterDialog />
  </Window>
);

export default App;
